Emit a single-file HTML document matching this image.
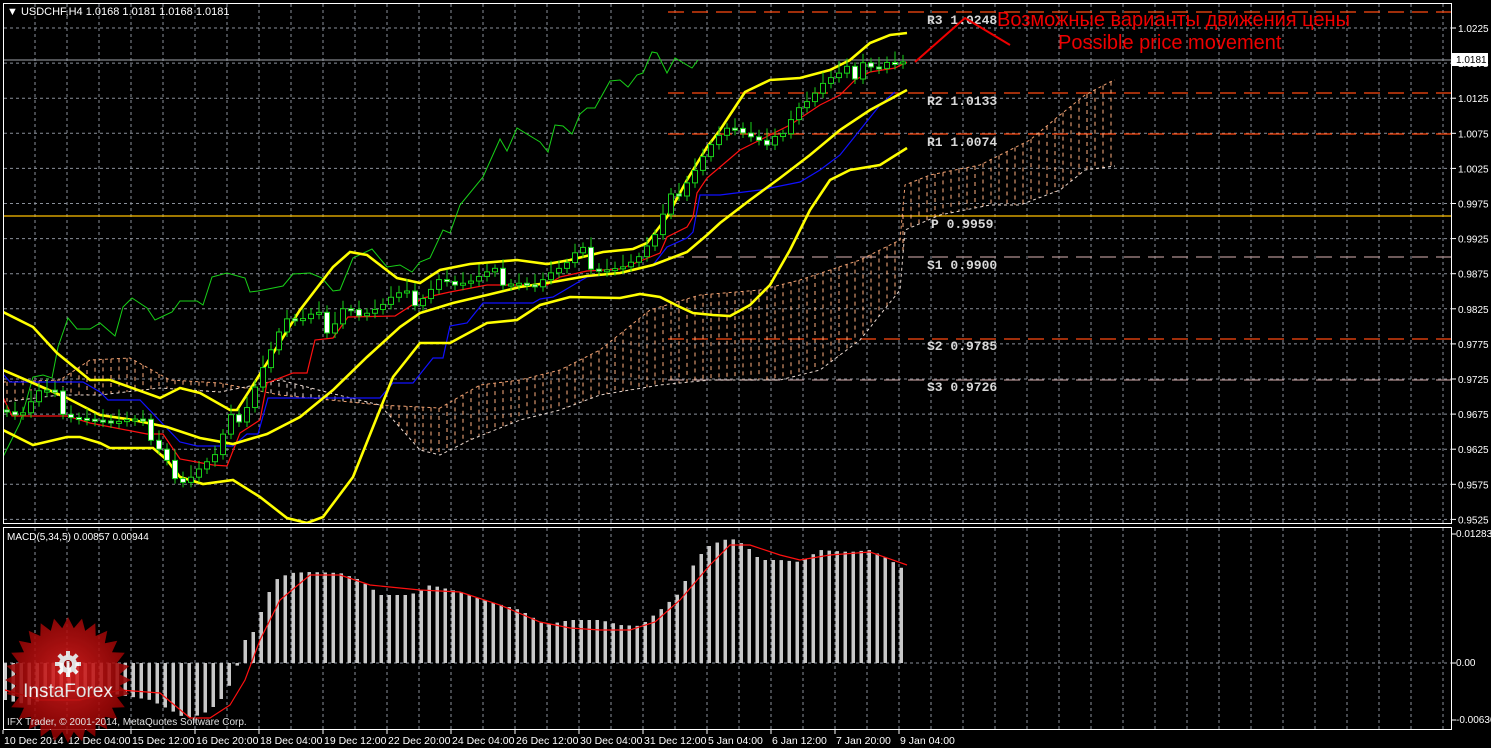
<!DOCTYPE html>
<html><head><meta charset="utf-8"><style>
html,body{margin:0;padding:0;background:#000;width:1491px;height:748px;overflow:hidden}
svg{display:block}
</style></head><body>
<svg id="s" width="1491" height="748" xmlns="http://www.w3.org/2000/svg" font-family="Liberation Sans, sans-serif">
<defs>
<clipPath id="cm"><rect x="4" y="4" width="1447" height="519"/></clipPath>
<clipPath id="cs"><rect x="4" y="528" width="1447" height="201"/></clipPath>
<radialGradient id="rg" cx="50%" cy="45%" r="55%"><stop offset="0" stop-color="#e02020"/><stop offset="1" stop-color="#8a0000"/></radialGradient>
</defs>
<g id="grid" stroke="#8a909a" stroke-width="1" stroke-dasharray="3,3" fill="none"></g>
<g id="main" clip-path="url(#cm)"></g>
<g id="sub" clip-path="url(#cs)"></g>
<g id="axes"></g>
<g font-family="Liberation Mono, monospace" font-weight="bold" font-size="13" fill="#d8d8d8">
<text x="927" y="24">R3 1.0248</text>
<text x="927" y="105">R2 1.0133</text>
<text x="927" y="146">R1 1.0074</text>
<text x="931" y="228">P 0.9959</text>
<text x="927" y="269">S1 0.9900</text>
<text x="927" y="350">S2 0.9785</text>
<text x="927" y="391">S3 0.9726</text>
</g>
<polyline points="915,62 965,18 1010,45" fill="none" stroke="#ee0000" stroke-width="2"/>
<text x="997" y="26" font-size="20" fill="#ee0000">Возможные варианты движения цены</text>
<text x="1058" y="49" font-size="20" fill="#ee0000">Possible price movement</text>
<text x="7" y="15" font-size="11" fill="#fff">▼ USDCHF,H4  1.0168 1.0181 1.0168 1.0181</text>
<text x="7" y="540" font-size="10" fill="#fff">MACD(5,34,5) 0.00857 0.00944</text>
<g opacity="0.88">
<polygon id="star" fill="url(#rg)"/>
<g fill="#fff" transform="translate(68,664)">
<circle r="9"/><circle r="4" fill="#a00000"/>
<g id="teeth"></g>
<rect x="-1.5" y="-3" width="3" height="14" fill="#fff"/>
</g>
<text x="68" y="697" font-size="19" fill="#fff" text-anchor="middle">InstaForex</text>
</g>
<text x="7" y="725" font-size="10" fill="#e0e0e0">IFX Trader, © 2001-2014, MetaQuotes Software Corp.</text>
</svg>
<script>
var NS="http://www.w3.org/2000/svg";
function el(p,t,a){var e=document.createElementNS(NS,t);for(var k in a)e.setAttribute(k,a[k]);p.appendChild(e);return e;}
var G=document.getElementById('grid'),M=document.getElementById('main'),S=document.getElementById('sub'),A=document.getElementById('axes');
for(var x=35;x<1451;x+=32){el(G,'line',{x1:x,y1:4,x2:x,y2:523});el(G,'line',{x1:x,y1:528,x2:x,y2:729});}
for(var i=0;i<15;i++){var y=28+i*35.1;el(G,'line',{x1:4,y1:y,x2:1451,y2:y});}
el(G,'line',{x1:4,y1:663,x2:1451,y2:663});
function hl(y,c,d,w){el(M,'line',{x1:668,y1:y,x2:1451,y2:y,stroke:c,'stroke-width':w||1.3,'stroke-dasharray':d});}
hl(12,'#ff4a10','16,8');hl(93,'#ff4a10','16,8');hl(134,'#ff4a10','16,8');
el(M,'line',{x1:4,y1:216,x2:1451,y2:216,stroke:'#ffc000','stroke-width':1.3});
hl(257,'#b09090','16,8');hl(339,'#ff4a10','16,8');hl(380,'#b09090','16,8');
el(M,'line',{x1:4,y1:60,x2:1451,y2:60,stroke:'#a0a4aa','stroke-width':1});
var up=[[3,382],[60,380],[90,360],[130,358],[170,380],[220,383],[280,395],[380,405],[440,408],[480,385],[520,380],[560,370],[600,350],[650,310],[700,295],[760,290],[800,280],[860,260],[900,240],[905,185],[930,175],[980,165],[1030,140],[1060,115],[1085,95],[1110,82],[1115,80]];
var lo=[[3,402],[60,395],[100,395],[160,388],[220,392],[280,380],[330,393],[380,405],[420,450],[440,455],[470,440],[520,420],[560,410],[600,395],[660,385],[710,380],[780,380],[820,370],[860,340],[900,290],[905,230],[940,215],[990,205],[1020,205],[1060,190],[1085,170],[1115,166]];
function interp(p,x){if(x<=p[0][0])return p[0][1];for(var i=0;i<p.length-1;i++){if(x>=p[i][0]&&x<=p[i+1][0]){var t=(x-p[i][0])/(p[i+1][0]-p[i][0]||1);return p[i][1]+t*(p[i+1][1]-p[i][1]);}}return p[p.length-1][1];}
for(var x=7;x<1115;x+=8){var a=interp(up,x),b=interp(lo,x);el(M,'line',{x1:x,y1:a,x2:x,y2:b,stroke:(a<b?'#ffb080':'#f0e0d8'),'stroke-width':1,'stroke-dasharray':'4,4'});}
function pl(p,c,w,d){var s=p.map(function(q){return q.join(',')}).join(' ');var o={points:s,fill:'none',stroke:c,'stroke-width':w};if(d)o['stroke-dasharray']=d;el(M,'polyline',o);}
pl(up,'#f0a070',1,'3,3');pl(lo,'#e8d8d0',1,'3,3');
pl([[3,457],[20,423],[33,377],[43,375],[52,378],[58,347],[68,318],[77,329],[90,329],[100,323],[115,336],[123,307],[132,298],[147,308],[155,320],[172,312],[180,301],[197,301],[203,305],[212,277],[227,273],[245,278],[250,292],[258,291],[283,286],[293,274],[310,273],[322,278],[333,291],[340,290],[353,258],[372,249],[387,267],[400,265],[412,272],[420,262],[430,258],[443,230],[450,233],[460,205],[483,177],[500,139],[507,151],[517,128],[540,142],[548,152],[555,125],[563,126],[572,134],[580,114],[587,108],[595,108],[610,81],[620,80],[628,87],[637,75],[643,73],[652,52],[657,53],[667,73],[675,58],[692,68],[698,60]],'#18d018',1);
pl([[3,374],[10,382],[83,382],[100,392],[108,400],[140,400],[180,442],[197,446],[233,446],[247,434],[258,434],[268,398],[380,398],[393,383],[413,383],[433,358],[443,358],[450,326],[467,323],[483,303],[533,303],[540,299],[553,297],[570,287],[587,277],[620,273],[653,265],[667,247],[687,238],[693,232],[700,195],[720,195],[760,190],[800,182],[820,170],[840,155],[860,130],[880,105],[895,92]],'#1010ff',1.2);
pl([[3,397],[12,416],[67,416],[90,423],[147,434],[163,434],[180,459],[213,465],[227,466],[240,433],[260,420],[267,383],[293,373],[307,373],[315,340],[333,338],[348,317],[395,316],[423,298],[450,292],[487,285],[547,285],[560,277],[587,271],[620,269],[643,260],[660,253],[667,237],[687,227],[693,217],[697,193],[707,178],[720,167],[740,150],[760,140],[790,125],[820,105],[840,95],[855,80],[870,72],[895,68],[907,62]],'#ff1010',1.2);
pl([[3,312],[33,327],[57,353],[90,380],[110,380],[160,398],[180,388],[200,393],[230,410],[237,410],[267,363],[300,310],[333,267],[350,252],[367,255],[397,278],[420,283],[440,270],[470,264],[517,260],[547,264],[570,260],[603,252],[633,249],[647,243],[667,217],[687,180],[707,147],[720,130],[745,92],[770,80],[800,78],[830,70],[850,60],[870,43],[890,35],[907,33]],'#ffff00',2.6);
pl([[3,430],[33,445],[67,437],[80,437],[100,443],[110,448],[153,448],[167,460],[180,477],[203,484],[233,480],[260,497],[287,518],[307,523],[323,517],[353,477],[393,377],[420,343],[450,343],[487,323],[517,320],[540,305],[570,297],[620,298],[640,294],[660,297],[680,307],[693,313],[713,315],[730,316],[750,305],[770,285],[790,250],[810,210],[830,180],[850,170],[880,165],[907,148]],'#ffff00',2.6);
pl([[3,370],[33,383],[67,398],[100,415],[133,420],[167,427],[200,438],[233,444],[267,434],[300,417],[333,390],[367,357],[400,327],[420,313],[453,303],[487,295],[520,287],[553,282],[587,276],[620,273],[653,265],[687,252],[707,235],[720,223],[750,200],[780,178],[810,155],[840,130],[870,110],[907,90]],'#ffff00',2.6);
var cp=[[7,410],[20,418],[40,395],[55,400],[70,410],[100,420],[115,425],[130,425],[150,430],[165,450],[175,475],[185,482],[200,470],[215,460],[230,425],[245,405],[260,370],[275,340],[285,320],[300,325],[315,320],[330,325],[345,300],[360,315],[380,310],[395,300],[410,300],[425,290],[440,275],[455,285],[470,285],[490,278],[505,276],[520,278],[535,285],[550,275],[565,270],[580,255],[595,262],[610,265],[625,265],[640,258],[655,240],[670,205],[680,185],[695,165],[705,150],[715,138],[730,128],[745,140],[760,150],[770,130],[785,128],[795,108],[810,100],[825,85],[840,80],[855,70],[865,52],[875,68],[885,60],[900,65],[907,62]];
var prev=cp[0][1];
for(var x=7;x<=907;x+=8){var c=interp(cp,x)+((x*37)%11-5)*1.8;var o=prev;var t=Math.min(o,c),b=Math.max(o,c);if(b-t<2){b=t+2;}
var wt=t-4-((x*13)%9),wb=b+4+((x*7)%8);
el(M,'line',{x1:x,y1:wt,x2:x,y2:wb,stroke:'#18d018','stroke-width':1});
el(M,'rect',{x:x-2.5,y:t,width:5,height:b-t,fill:(c<o?'#000':'#fff'),stroke:'#18d018','stroke-width':1});prev=c;}
var mp=[[5,700],[30,705],[60,690],[90,690],[120,695],[150,700],[170,710],[185,718],[200,715],[210,710],[225,695],[235,672],[245,640],[255,630],[265,600],[275,580],[290,573],[310,572],[340,573],[360,580],[380,595],[410,595],[430,585],[460,592],[490,602],[520,610],[545,625],[570,620],[600,620],[620,625],[640,626],[660,610],[680,592],[690,570],[700,555],[710,545],[730,538],[745,545],[760,560],[780,560],[800,562],[820,550],[850,552],[870,550],[890,560],[907,572]];
for(var x=5;x<=907;x+=8){var v=interp(mp,x);el(S,'rect',{x:x-1.5,y:Math.min(v,663),width:3.5,height:Math.abs(v-663),fill:'#c8c8c8'});}
var sg=[[5,690],[40,700],[80,700],[120,690],[160,693],[190,718],[210,718],[230,705],[245,680],[260,640],[280,600],[310,575],[340,575],[370,585],[420,590],[460,592],[500,605],[540,622],[570,628],[600,630],[630,630],[655,622],[680,600],[710,565],[730,545],[750,545],[780,555],[800,560],[830,555],[870,552],[907,565]];
el(S,'polyline',{points:sg.map(function(q){return q.join(',')}).join(' '),fill:'none',stroke:'#ff1010','stroke-width':1.2});
el(A,'rect',{x:3.5,y:3.5,width:1448,height:520,fill:'none',stroke:'#fff','stroke-width':1});
el(A,'rect',{x:3.5,y:527.5,width:1448,height:202,fill:'none',stroke:'#fff','stroke-width':1});
var pr=['1.0225','1.0175','1.0125','1.0075','1.0025','0.9975','0.9925','0.9875','0.9825','0.9775','0.9725','0.9675','0.9625','0.9575','0.9525'];
for(var i=0;i<15;i++){var y=28+i*35.1;el(A,'line',{x1:1452,y1:y,x2:1456,y2:y,stroke:'#fff'});var t=el(A,'text',{x:1458,y:y+4,'font-size':10,fill:'#fff'});t.textContent=pr[i];}
el(A,'rect',{x:1452,y:53,width:36,height:13,fill:'#fff'});var t=el(A,'text',{x:1456,y:63,'font-size':10,fill:'#000'});t.textContent='1.0181';
[['0.01283',537],['0.00',666],['-0.00636',723]].forEach(function(q){el(A,'line',{x1:1452,y1:q[1]-3,x2:1456,y2:q[1]-3,stroke:'#fff'});var t=el(A,'text',{x:1456,y:q[1],'font-size':10,fill:'#fff'});t.textContent=q[0];});
var dl=['10 Dec 2014','12 Dec 04:00','15 Dec 12:00','16 Dec 20:00','18 Dec 04:00','19 Dec 12:00','22 Dec 20:00','24 Dec 04:00','26 Dec 12:00','30 Dec 04:00','31 Dec 12:00','5 Jan 04:00','6 Jan 12:00','7 Jan 20:00','9 Jan 04:00'];
for(var i=0;i<15;i++){var x=3+64*i;el(A,'line',{x1:x,y1:730,x2:x,y2:734,stroke:'#fff'});var t=el(A,'text',{x:x+1,y:744,'font-size':10.5,fill:'#fff'});t.textContent=dl[i];}
var pts=[];for(var i=0;i<56;i++){var r=i%2?52:63;var a=i*Math.PI/28;pts.push((68+r*Math.cos(a)).toFixed(1)+','+(680+r*Math.sin(a)).toFixed(1));}
document.getElementById('star').setAttribute('points',pts.join(' '));
var T=document.getElementById('teeth');for(var i=0;i<8;i++){el(T,'rect',{x:-2,y:-13,width:4,height:6,transform:'rotate('+(i*45)+')'});}
</script>
</body></html>
